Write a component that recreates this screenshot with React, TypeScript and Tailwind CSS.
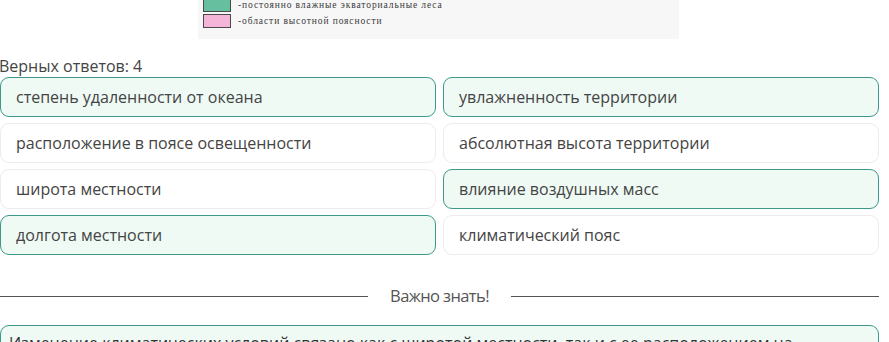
const answers = [
  { text: "степень удаленности от океана", ok: true },
  { text: "увлажненность территории", ok: true },
  { text: "расположение в поясе освещенности", ok: false },
  { text: "абсолютная высота территории", ok: false },
  { text: "широта местности", ok: false },
  { text: "влияние воздушных масс", ok: true },
  { text: "долгота местности", ok: true },
  { text: "климатический пояс", ok: false },
]

export default function App() {
  return (
    <div className="w-[889px] h-[342px] overflow-hidden bg-white font-['Open_Sans',sans-serif] text-[#333]">
      <div className="w-[879px]">
        {/* Legend image */}
        <div className="ml-[198px] w-[481px] h-[41px] bg-[#f7f7f7] pl-[5px] flex flex-col gap-[2px] -mt-[2px]">
          <div className="flex items-center gap-[7px] h-[14px]">
            <div className="w-[28px] h-[14px] bg-[#66c0a0] border border-[#4a4a4a]" />
            <span className="font-['Liberation_Serif',serif] text-[9.5px] text-[#3a3a3a] tracking-[0.9px]">
              -постоянно влажные экваториальные леса
            </span>
          </div>
          <div className="flex items-center gap-[7px] h-[14px]">
            <div className="w-[28px] h-[14px] bg-[#f5b5d8] border border-[#4a4a4a]" />
            <span className="font-['Liberation_Serif',serif] text-[9.5px] text-[#3a3a3a] tracking-[0.9px]">
              -области высотной поясности
            </span>
          </div>
        </div>

        <div className="mt-[16px] -ml-[1px] text-[16px] leading-[22px] text-[#444]">Верных ответов: 4</div>

        <div className="grid grid-cols-2 gap-x-[7px] gap-y-[6px]">
          {answers.map((a) => (
            <div
              key={a.text}
              className={
                a.ok
                  ? "h-[40px] rounded-[9px] border border-[#3f998a] bg-[#effaf5] flex items-center px-[15px] text-[16px] text-[#444]"
                  : "h-[40px] rounded-[9px] border border-[#ececec] bg-white flex items-center px-[15px] text-[16px] text-[#444]"
              }
            >
              {a.text}
            </div>
          ))}
        </div>

        <div className="flex items-center mt-[30px] h-[22px]">
          <div className="h-px bg-[#555] flex-1" />
          <span className="px-[22px] text-[16.5px] tracking-[-0.6px] text-[#555]">Важно знать!</span>
          <div className="h-px bg-[#555] flex-1" />
        </div>

        <div className="mt-[18px] rounded-[9px] border border-[#3f998a] bg-[#effaf5] px-[8px] pt-[6px] text-[16px] leading-[22px] text-[#333] whitespace-nowrap overflow-hidden">
          Изменение климатических условий связано как с широтой местности, так и с ее расположением на
        </div>
      </div>
    </div>
  )
}
